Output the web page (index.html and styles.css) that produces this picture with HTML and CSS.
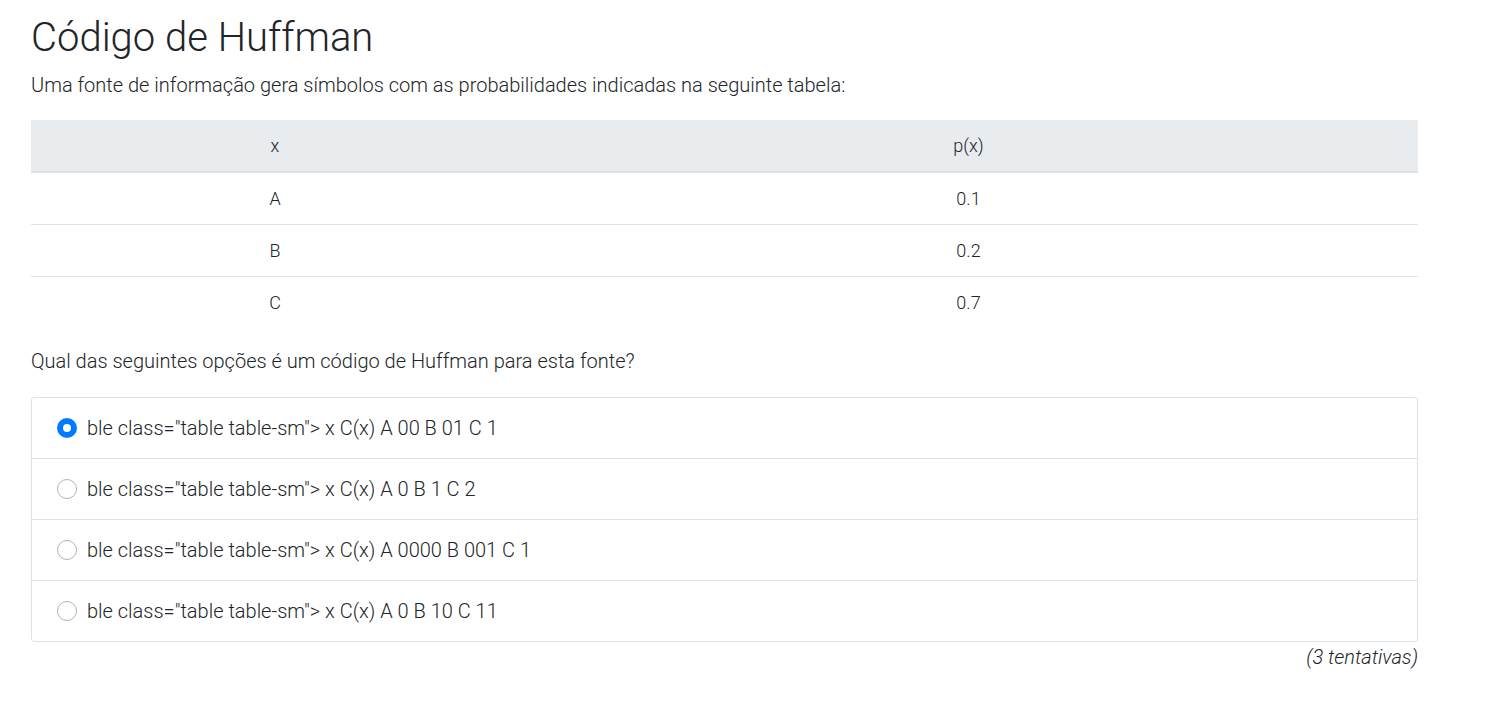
FILE: index.html
```html
<!DOCTYPE html>
<html lang="pt">
<head>
<meta charset="utf-8">
<title>Código de Huffman</title>
<link rel="stylesheet" href="styles.css">
</head>
<body>
<main class="page">
  <h1 class="title">Código de Huffman</h1>
  <p class="lead">Uma fonte de informação gera símbolos com as probabilidades indicadas na seguinte tabela:</p>
  <table class="prob-table">
    <thead>
      <tr><th class="col-x">x</th><th>p(x)</th></tr>
    </thead>
    <tbody>
      <tr><td>A</td><td>0.1</td></tr>
      <tr><td>B</td><td>0.2</td></tr>
      <tr><td>C</td><td>0.7</td></tr>
    </tbody>
  </table>
  <p class="question">Qual das seguintes opções é um código de Huffman para esta fonte?</p>
  <ul class="options">
    <li class="option"><span class="radio checked"></span><span>ble class="table table-sm"&gt; x C(x) A 00 B 01 C 1</span></li>
    <li class="option"><span class="radio"></span><span>ble class="table table-sm"&gt; x C(x) A 0 B 1 C 2</span></li>
    <li class="option"><span class="radio"></span><span>ble class="table table-sm"&gt; x C(x) A 0000 B 001 C 1</span></li>
    <li class="option"><span class="radio"></span><span>ble class="table table-sm"&gt; x C(x) A 0 B 10 C 11</span></li>
  </ul>
  <div class="attempts">(3 tentativas)</div>
</main>
</body>
</html>
```
FILE: styles.css
```css
html, body {
  margin: 0;
  padding: 0;
  background: #fff;
}
body {
  font-family: Roboto, "Liberation Sans", sans-serif;
  font-weight: 300;
  font-size: 20px;
  line-height: 1.5;
  color: #212529;
}
.page {
  width: 1387px;
  padding: 14px 0 0 31px;
}
.title {
  margin: 0 0 8px 0;
  font-size: 40px;
  font-weight: 300;
  line-height: 1.2;
}
.lead {
  margin: 0 0 20px 0;
}
.prob-table {
  width: 100%;
  border-collapse: collapse;
  margin-bottom: 18px;
  font-size: 18px;
}
.prob-table th,
.prob-table td {
  text-align: center;
  padding: 12px;
  border-top: 1px solid #dee2e6;
  line-height: 27px;
}
.prob-table th {
  font-weight: 300;
  background: #e9ecef;
  border-top: 0;
  border-bottom: 2px solid #dee2e6;
}
.prob-table .col-x {
  width: 464px;
}
.question {
  margin: 0 0 21px 0;
}
.options {
  list-style: none;
  margin: 0;
  padding: 0;
  border: 1px solid #dee2e6;
  border-radius: 3px;
}
.option {
  display: flex;
  align-items: center;
  gap: 10px;
  padding: 15px 25px;
  border-top: 1px solid #dee2e6;
}
.option:first-child {
  border-top: 0;
}
.radio {
  box-sizing: border-box;
  width: 20px;
  height: 20px;
  border-radius: 50%;
  border: 1px solid #adb5bd;
  background: #fff;
  flex: none;
}
.radio.checked {
  border: 6px solid #007bff;
  background: #fff;
}
.attempts {
  text-align: right;
  font-style: italic;
  margin-top: 0;
}
```
